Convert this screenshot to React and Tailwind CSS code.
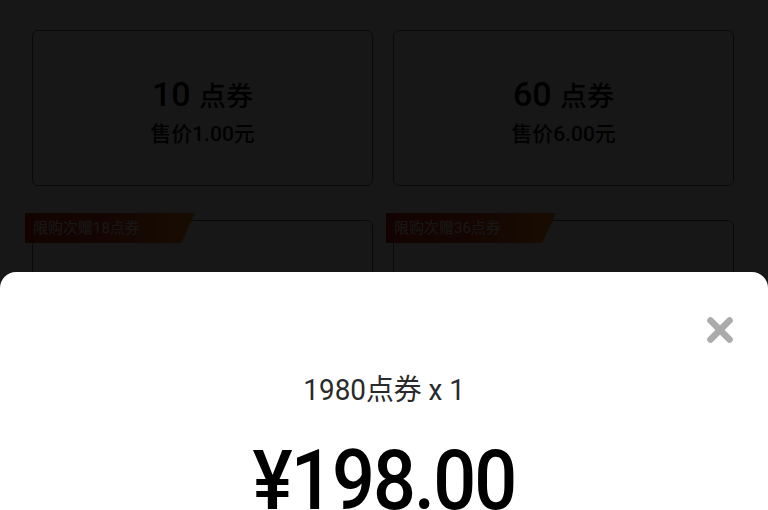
import React from 'react';
import { X } from 'lucide-react';

const packs = [
  { points: 10, price: '1.00' },
  { points: 60, price: '6.00' },
  { points: 180, price: '18.00', badge: '限购次赠18点券' },
  { points: 360, price: '36.00', badge: '限购次赠36点券' },
];

const Card = ({ pack }) => (
  <div className="relative">
    {pack.badge && (
      <div
        className="absolute -left-[7px] -top-[7px] z-10 h-[30px] w-[170px] bg-gradient-to-r from-[#c81d12] via-[#e0401a] to-[#ff8a1c] pl-2 text-[15px] leading-[30px] text-white"
        style={{ clipPath: 'polygon(0 0, 100% 0, 92% 100%, 0 100%)' }}
      >
        {pack.badge}
      </div>
    )}
    <div className="flex h-[156px] flex-col items-center justify-center rounded-md border border-[#6a6a6a] bg-white pt-2">
      <div className="font-medium text-[34px] leading-10 text-black">
        {pack.points} <span className="text-[27px]">点券</span>
      </div>
      <div className="mt-0.5 font-medium text-[21px] text-[#111]">售价{pack.price}元</div>
    </div>
  </div>
);

const App = () => {
  return (
    <div
      className="relative h-[510px] w-[768px] overflow-hidden bg-white"
      style={{ fontFamily: 'Roboto, "Noto Sans CJK SC", sans-serif' }}
    >
      <div className="grid grid-cols-2 gap-x-5 gap-y-[34px] pl-8 pr-[34px] pt-[30px]">
        {packs.map((p) => (
          <Card key={p.points} pack={p} />
        ))}
      </div>

      {/* overlay */}
      <div className="absolute inset-0 z-20 bg-black/[0.91]" />

      {/* bottom sheet */}
      <div className="absolute inset-x-0 top-[272px] bottom-0 z-30 rounded-t-2xl bg-white">
        <button className="absolute right-[29px] top-[39px] text-[#ababab]">
          <X size={38} strokeWidth={4.2} />
        </button>
        <div className="flex flex-col items-center pt-[102px]">
          <div className="text-[29px] leading-8 text-[#2a2a2a] scale-x-[0.96]">
            1980点券 x 1
          </div>
          <div className="mt-[33px] origin-top scale-x-[0.9] font-medium text-[84px] leading-[84px] tracking-tight text-black">
            ¥198.00
          </div>
        </div>
      </div>
    </div>
  );
};

export default App;
